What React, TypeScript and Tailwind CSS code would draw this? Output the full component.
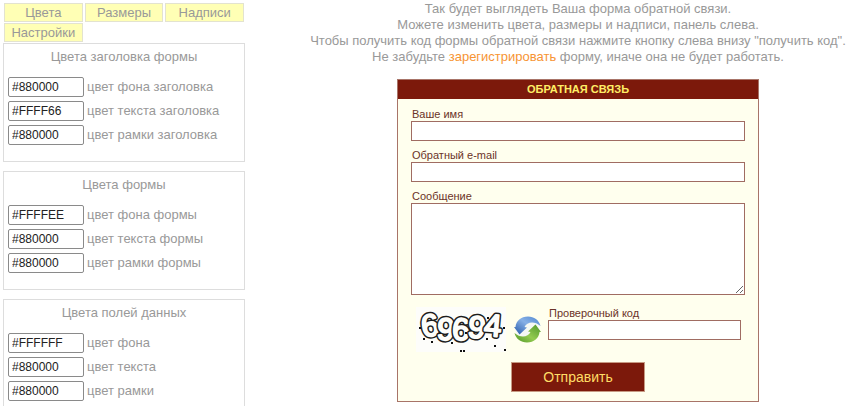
import type { ReactNode } from "react";

const tabs = ["Цвета", "Размеры", "Надписи", "Настройки"];

const groups = [
  {
    id: "header",
    title: "Цвета заголовка формы",
    fields: [
      { label: "цвет фона заголовка", value: "#880000" },
      { label: "цвет текста заголовка", value: "#FFFF66" },
      { label: "цвет рамки заголовка", value: "#880000" },
    ],
  },
  {
    id: "form",
    title: "Цвета формы",
    fields: [
      { label: "цвет фона формы", value: "#FFFFEE" },
      { label: "цвет текста формы", value: "#880000" },
      { label: "цвет рамки формы", value: "#880000" },
    ],
  },
  {
    id: "data",
    title: "Цвета полей данных",
    fields: [
      { label: "цвет фона", value: "#FFFFFF" },
      { label: "цвет текста", value: "#880000" },
      { label: "цвет рамки", value: "#880000" },
    ],
  },
];

const digits = [
  { char: "6", x: 14, y: 29, angle: -9 },
  { char: "9", x: 30, y: 33, angle: 4 },
  { char: "6", x: 45, y: 33, angle: 3 },
  { char: "9", x: 61, y: 31, angle: 7 },
  { char: "4", x: 77, y: 29, angle: 5 },
];

const specks = [
  [3, 20], [7, 31], [15, 34], [44, 43], [47, 43], [70, 31],
  [78, 38], [87, 20], [88, 42], [71, 10], [49, 25], [35, 35],
];

function Captcha() {
  return (
    <svg
      width="90"
      height="45"
      viewBox="0 0 90 45"
      aria-label="Проверочный код"
      role="img"
      className="overflow-visible"
    >
      <rect width="90" height="45" fill="#fdfdfa" />
      <g
        fontFamily="Liberation Sans, sans-serif"
        fontWeight="400"
        fontSize="31"
        textAnchor="middle"
        strokeLinejoin="round"
      >
        {digits.map((d, i) => (
          <g key={i} transform={`rotate(${d.angle} ${d.x} 20)`}>
            <text x={d.x} y={d.y} fill="#1c1c1c" stroke="#1c1c1c" strokeWidth="5">
              {d.char}
            </text>
            <text x={d.x} y={d.y} fill="#fdfdfa" stroke="#fdfdfa" strokeWidth="2" aria-hidden="true">
              {d.char}
            </text>
          </g>
        ))}
      </g>
      {specks.map(([x, y]) => (
        <rect key={`${x}-${y}`} x={x} y={y} width="2" height="2" fill="#111" />
      ))}
    </svg>
  );
}

function RefreshIcon() {
  return (
    <svg width="27" height="27" viewBox="0 0 27 27" aria-hidden="true">
      <defs>
        <linearGradient id="blue" x1="1" y1="0" x2="0" y2="1">
          <stop offset="0" stopColor="#4f86cf" />
          <stop offset="0.45" stopColor="#86b0e6" />
          <stop offset="1" stopColor="#2558a8" />
        </linearGradient>
        <linearGradient id="green" x1="1" y1="0" x2="0" y2="1">
          <stop offset="0" stopColor="#4f962b" />
          <stop offset="0.55" stopColor="#93cb50" />
          <stop offset="1" stopColor="#4d9426" />
        </linearGradient>
      </defs>
      <circle cx="13.5" cy="13.5" r="12" fill="#f4f8f4" />
      <path
        d="M26.500 10C25 4 20 0.500 14 0.500 7 0.500 2 5 1.500 11L0 11l5.500 7.500L13 11.500l-2.500-0.500C13 6 20 4.500 26.500 10z"
        fill="url(#blue)"
      />
      <path
        d="M0.500 17C2 23 7 26.500 13 26.500c7 0 12-4.500 12.500-10.500L27 16l-5.500-7.500L14 15.500l2.500 0.500C14 21 7 22.500 0.500 17z"
        fill="url(#green)"
      />
    </svg>
  );
}

function Field({ id, label, children }: { id: string; label: string; children: ReactNode }) {
  return (
    <div className="flex flex-col">
      <label htmlFor={id} className="px-px text-[11px] leading-[14px]">
        {label}
      </label>
      {children}
    </div>
  );
}

export default function App() {
  return (
    <div className="flex bg-white font-['Liberation_Sans',Arial,sans-serif] text-[13px] leading-4 text-[#999]">
      <aside className="w-[246px] shrink-0 pt-[3px] pr-px pl-[3px]">
        <nav className="grid grid-cols-3 gap-x-0.5 gap-y-px px-px pb-px">
          {tabs.map((tab) => (
            <button
              key={tab}
              type="button"
              className="h-[19px] border border-[#e3e3cf] bg-[#ffffb5] text-center leading-4"
            >
              {tab}
            </button>
          ))}
        </nav>
        <div className="flex flex-col gap-[9px]">
          {groups.map((group) => (
            <section key={group.id} className="border border-[#ddd] px-1 pt-[5px] pb-4">
              <h2 className="mb-3 text-center">{group.title}</h2>
              <div className="flex flex-col gap-1">
                {group.fields.map((field, i) => (
                  <div key={field.label} className="flex items-center gap-[3px]">
                    <input
                      id={`${group.id}-${i}`}
                      type="text"
                      defaultValue={field.value}
                      className="h-5 w-[76px] rounded-xs border border-[#8a8a8a] bg-white px-[3px] text-[12px] text-[#222]"
                    />
                    <label htmlFor={`${group.id}-${i}`}>{field.label}</label>
                  </div>
                ))}
              </div>
            </section>
          ))}
        </div>
      </aside>

      <main className="flex flex-1 flex-col items-center pl-[58px]">
        <p className="pt-px text-center whitespace-nowrap">
          Так будет выглядеть Ваша форма обратной связи.
          <br />
          Можете изменить цвета, размеры и надписи, панель слева.
          <br />
          Чтобы получить код формы обратной связи нажмите кнопку слева внизу "получить код".
          <br />
          Не забудьте{" "}
          <a href="#register" className="text-[#f79433]">
            зарегистрировать
          </a>{" "}
          форму, иначе она не будет работать.
        </p>

        <form className="mt-3.5 w-[362px] border border-[#a87468] bg-[#ffffee] text-[#6b3328]">
          <h1 className="bg-[#7c190b] text-center text-[11px] leading-[19px] font-bold text-[#ffee66]">
            ОБРАТНАЯ СВЯЗЬ
          </h1>
          <div className="flex flex-col gap-[7px] px-[13px] pt-2">
            <Field id="name" label="Ваше имя">
              <input id="name" type="text" className="h-5 border border-[#a06c62] bg-white px-1" />
            </Field>
            <Field id="email" label="Обратный e-mail">
              <input id="email" type="email" className="h-5 border border-[#a06c62] bg-white px-1" />
            </Field>
            <Field id="message" label="Сообщение">
              <textarea id="message" className="h-[92px] resize-y border border-[#a06c62] bg-white px-1" />
            </Field>
          </div>
          <div className="flex items-center pt-[11px] pr-[17px] pl-[18px]">
            <Captcha />
            <button type="button" aria-label="Обновить код" className="mr-[7px] ml-2">
              <RefreshIcon />
            </button>
            <div className="flex-1 pb-3">
              <Field id="code" label="Проверочный код">
                <input id="code" type="text" className="h-5 border border-[#a06c62] bg-white px-1" />
              </Field>
            </div>
          </div>
          <div className="flex justify-center pt-2.5 pb-[9px]">
            <button
              type="submit"
              className="h-[30px] w-[134px] border border-[#c79a83] bg-[#7c190b] text-[14px] text-[#ffdd66]"
            >
              Отправить
            </button>
          </div>
        </form>
      </main>
    </div>
  );
}
